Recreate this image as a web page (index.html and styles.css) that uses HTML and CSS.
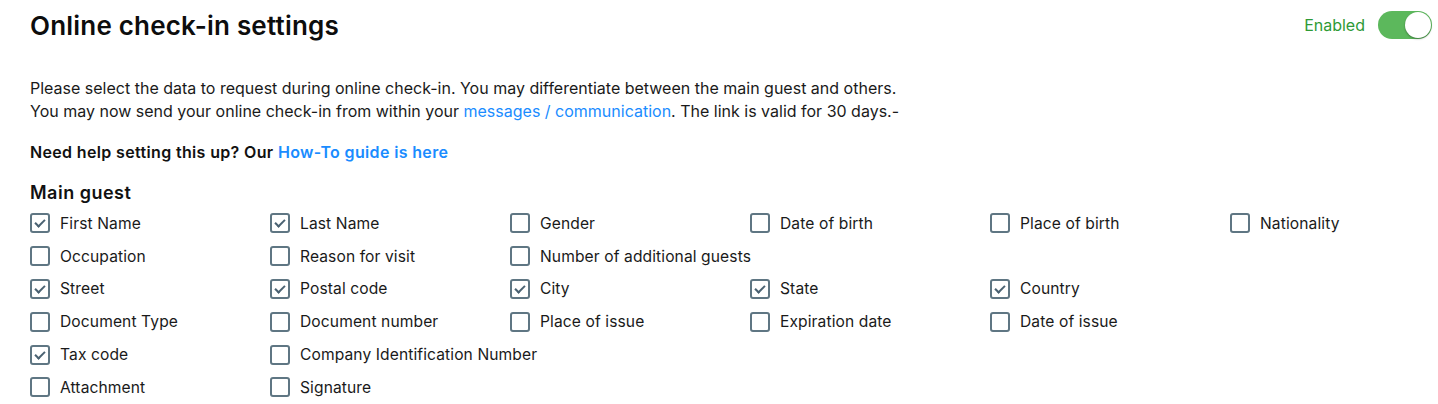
FILE: index.html
```html
<!DOCTYPE html>
<html lang="en">
<head>
<meta charset="utf-8">
<title>Online check-in settings</title>
<link rel="stylesheet" href="styles.css">
</head>
<body>
<div class="page">
  <header class="header">
    <h1 class="title">Online check-in settings</h1>
    <div class="status">
      <span class="status-label">Enabled</span>
      <span class="toggle"><span class="knob"></span></span>
    </div>
  </header>
  <p class="intro">Please select the data to request during online check-in. You may differentiate between the main guest and others.<br>You may now send your online check-in from within your <a class="link" href="#">messages / communication</a>. The link is valid for 30 days.-</p>
  <p class="help">Need help setting this up? Our <a class="link" href="#">How-To guide is here</a></p>
  <h2 class="section">Main guest</h2>
  <div class="grid">
    <label class="opt"><span class="box checked"></span>First Name</label>
    <label class="opt"><span class="box checked"></span>Last Name</label>
    <label class="opt"><span class="box"></span>Gender</label>
    <label class="opt"><span class="box"></span>Date of birth</label>
    <label class="opt"><span class="box"></span>Place of birth</label>
    <label class="opt"><span class="box"></span>Nationality</label>

    <label class="opt"><span class="box"></span>Occupation</label>
    <label class="opt"><span class="box"></span>Reason for visit</label>
    <label class="opt"><span class="box"></span>Number of additional guests</label>
    <span></span><span></span><span></span>

    <label class="opt"><span class="box checked"></span>Street</label>
    <label class="opt"><span class="box checked"></span>Postal code</label>
    <label class="opt"><span class="box checked"></span>City</label>
    <label class="opt"><span class="box checked"></span>State</label>
    <label class="opt"><span class="box checked"></span>Country</label>
    <span></span>

    <label class="opt"><span class="box"></span>Document Type</label>
    <label class="opt"><span class="box"></span>Document number</label>
    <label class="opt"><span class="box"></span>Place of issue</label>
    <label class="opt"><span class="box"></span>Expiration date</label>
    <label class="opt"><span class="box"></span>Date of issue</label>
    <span></span>

    <label class="opt"><span class="box checked"></span>Tax code</label>
    <label class="opt"><span class="box"></span>Company Identification Number</label>
    <span></span><span></span><span></span><span></span>

    <label class="opt"><span class="box"></span>Attachment</label>
    <label class="opt"><span class="box"></span>Signature</label>
  </div>
</div>
</body>
</html>
```
FILE: styles.css
```css
* { box-sizing: border-box; }
html, body { margin: 0; padding: 0; background: #fff; }
body {
  font-family: Inter, "Noto Sans", sans-serif;
  color: #111;
}
.page { padding: 0 6px 0 30px; }
.header {
  display: flex;
  justify-content: space-between;
  align-items: center;
  height: 50px;
}
.title {
  margin: 0;
  font-size: 26px;
  font-weight: 600;
  letter-spacing: 0.2px;
  color: #0d0d0d;
}
.status { display: flex; align-items: center; gap: 13px; }
.status-label { color: #2e9a36; font-size: 16px; }
.toggle {
  display: flex;
  justify-content: flex-end;
  width: 54px;
  height: 28px;
  border-radius: 14px;
  background: #5cb85c;
  padding: 1px;
}
.knob {
  width: 26px;
  height: 26px;
  border-radius: 50%;
  background: #fff;
  box-shadow: 0 1px 2px rgba(0,0,0,0.35);
}
.intro {
  margin: 27px 0 0;
  font-size: 16px;
  line-height: 23px;
  color: #1a1a1a;
}
.link { color: #1a8cff; text-decoration: none; }
.help {
  margin: 18px 0 0;
  font-size: 16px;
  font-weight: 600;
  letter-spacing: 0.35px;
  line-height: 23px;
}
.section {
  margin: 18px 0 0;
  font-size: 18px;
  font-weight: 600;
  letter-spacing: 0.5px;
  line-height: 22px;
}
.grid {
  display: grid;
  grid-template-columns: repeat(6, 240px);
  grid-auto-rows: 32.8px;
  margin-top: 3px;
}
.opt {
  display: flex;
  align-items: center;
  gap: 10px;
  font-size: 15.6px;
  letter-spacing: 0.1px;
  color: #1a1a1a;
  white-space: nowrap;
}
.box {
  flex: none;
  width: 20px;
  height: 20px;
  border: 2px solid #5f7683;
  border-radius: 3px;
  position: relative;
}
.box.checked::after {
  content: "";
  position: absolute;
  width: 8px;
  height: 4px;
  border-left: 2px solid #4a6272;
  border-bottom: 2px solid #4a6272;
  transform: rotate(-45deg);
  top: 4px;
  left: 3px;
}
```
